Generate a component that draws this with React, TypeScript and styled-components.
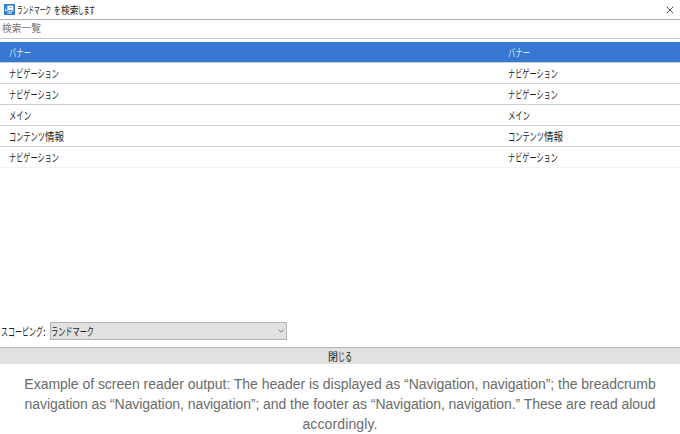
import React from "react";
import styled, { createGlobalStyle } from "styled-components";

const Global = createGlobalStyle`
  * { box-sizing: border-box; }
  html, body { margin: 0; padding: 0; background: #fff; }
  body { overflow: hidden; font-family: "Noto Sans CJK JP", sans-serif; color: #1c1c1c; }
`;

const Page = styled.main`
  width: 680px;
  height: 434px;
  display: flex;
  flex-direction: column;
`;

/* Condensed UI lettering: each run is squeezed from its em width to $w. */
const Run = styled.span<{ $n: number; $w: number; $size: number }>`
  display: inline-block;
  flex: none;
  white-space: pre;
  font-size: ${(p) => p.$size}px;
  width: ${(p) => p.$n * p.$size}px;
  margin-right: ${(p) => p.$w - p.$n * p.$size}px;
  transform: scaleX(${(p) => p.$w / (p.$n * p.$size)});
  transform-origin: 0 50%;
`;

const Label = styled.span`
  display: flex;
  align-items: center;
  line-height: 16px;
  white-space: nowrap;
`;

type Part = [text: string, width: number, em?: number];

const Text = ({ parts, size = 11 }: { parts: Part[]; size?: number }) => (
  <Label>
    {parts.map(([t, w, em], i) => (
      <Run key={i} $n={em ?? t.length} $w={w} $size={size}>
        {t}
      </Run>
    ))}
  </Label>
);

const TitleBar = styled.header`
  display: flex;
  align-items: center;
  height: 19px;
  padding: 0 6px 0 4px;
`;

const AppIcon = styled.svg`
  width: 11px;
  height: 11px;
  margin-right: 2px;
`;

const CloseIcon = styled.svg`
  width: 8px;
  height: 8px;
  margin-left: auto;
`;

const SearchBox = styled.div`
  display: flex;
  align-items: center;
  height: 20px;
  padding: 0 0 2px 2px;
  border-top: 1px solid #b2b2b2;
  border-bottom: 1px solid #c6c6c6;
  color: #747474;
`;

const List = styled.div`
  margin-top: 3px;
  height: 280px;
`;

const Row = styled.div<{ $selected?: boolean; $last?: boolean }>`
  display: grid;
  grid-template-columns: 499px 1fr;
  align-items: center;
  height: 21px;
  padding-left: 9px;
  border-bottom: 1px solid ${(p) => (p.$last ? "#f3f3f3" : "#cfcfcf")};
  background: ${(p) => (p.$selected ? "#3878d2" : "#fff")};
  color: ${(p) => (p.$selected ? "#d3efff" : "#1c1c1c")};
`;

const Scope = styled.div`
  display: flex;
  align-items: center;
  height: 18px;
`;

const ScopeLabel = styled.div`
  width: 50px;
  padding: 0 0 1px 1px;
`;

const Select = styled.div`
  display: flex;
  align-items: center;
  justify-content: space-between;
  width: 237px;
  height: 18px;
  padding: 0 2px 1px 0;
  border: 1px solid #b3b3b3;
  background: #e1e1e1;
`;

const Chevron = styled.svg`
  width: 6px;
  height: 4px;
`;

const CloseButton = styled.div`
  display: flex;
  align-items: center;
  justify-content: center;
  height: 17px;
  margin-top: 7px;
  padding-bottom: 1px;
  border-top: 1px solid #b5b5b5;
  background: #e1e1e1;
`;

const Caption = styled.p`
  margin: 10px 0 0;
  text-align: center;
  font-family: "Liberation Sans", sans-serif;
  font-size: 14px;
  line-height: 20px;
  color: #6b6b6b;
`;

const Line = styled.span<{ $spacing: number }>`
  display: block;
  white-space: nowrap;
  letter-spacing: ${(p) => p.$spacing}px;
`;

const nav: Part[] = [["ナビゲーション", 50]];
const rows: Part[][] = [
  [["バナー", 22]],
  nav,
  nav,
  [["メイン", 22]],
  [["コンテンツ", 36], ["情報", 19]],
  nav,
];

export default function App() {
  return (
    <Page>
      <Global />
      <TitleBar>
        <AppIcon viewBox="0 0 11 11">
          <rect width="11" height="11" rx="0.7" fill="#2d7bd0" />
          <rect x="3.3" y="1.6" width="6" height="4.6" fill="#fff" />
          <path d="M5 3.1h2.6v1H5z" fill="#7db4e8" />
          <path d="M1.6 4.6v2.2h2l1 1.1h3l1-1.1h1" fill="none" stroke="#fff" strokeWidth="0.9" />
          <path d="M3 9.2h5" stroke="#e8f3ff" strokeWidth="0.8" />
        </AppIcon>
        <Text size={10} parts={[["ランドマーク", 34], [" ", 3, 0.3], ["を", 6.5], ["検索", 17.5], ["します", 17]]} />
        <CloseIcon viewBox="0 0 8 8">
          <path d="M0.8 0.8l6.4 6.4M7.2 0.8L0.8 7.2" stroke="#444" strokeWidth="0.9" />
        </CloseIcon>
      </TitleBar>
      <SearchBox>
        <Text size={10.5} parts={[["検索一覧", 39]]} />
      </SearchBox>
      <List>
        {rows.map((parts, i) => (
          <Row key={i} $selected={i === 0} $last={i === rows.length - 1}>
            <Text parts={parts} />
            <Text parts={parts} />
          </Row>
        ))}
      </List>
      <Scope>
        <ScopeLabel>
          <Text parts={[["スコーピング", 42], [":", 3, 0.3]]} />
        </ScopeLabel>
        <Select>
          <Text parts={[["ランドマーク", 43]]} />
          <Chevron viewBox="0 0 6 4">
            <path d="M0.5 0.7L3 3.1L5.5 0.7" fill="none" stroke="#666" strokeWidth="0.8" />
          </Chevron>
        </Select>
      </Scope>
      <CloseButton>
        <Text parts={[["閉", 10], ["じる", 14]]} />
      </CloseButton>
      <Caption>
        <Line $spacing={-0.035}>
          Example of screen reader output: The header is displayed as “Navigation, navigation”; the breadcrumb
        </Line>
        <Line $spacing={-0.068}>
          navigation as “Navigation, navigation”; and the footer as “Navigation, navigation.” These are read aloud
        </Line>
        <Line $spacing={0.12}>accordingly.</Line>
      </Caption>
    </Page>
  );
}
